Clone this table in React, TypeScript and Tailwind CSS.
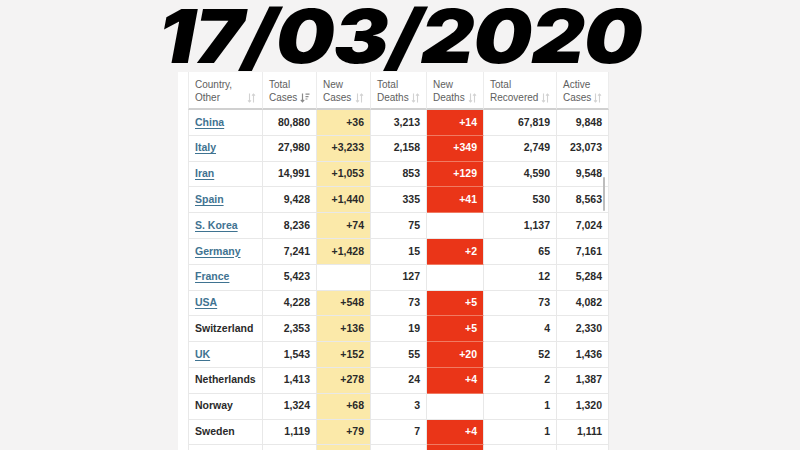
import React from "react";

type Row = {
  country: string;
  link: boolean;
  total: string;
  newCases: string;
  deaths: string;
  newDeaths: string;
  recovered: string;
  active: string;
  hidden?: boolean;
};

const rows: Row[] = [
  { country: "China", link: true, total: "80,880", newCases: "+36", deaths: "3,213", newDeaths: "+14", recovered: "67,819", active: "9,848" },
  { country: "Italy", link: true, total: "27,980", newCases: "+3,233", deaths: "2,158", newDeaths: "+349", recovered: "2,749", active: "23,073" },
  { country: "Iran", link: true, total: "14,991", newCases: "+1,053", deaths: "853", newDeaths: "+129", recovered: "4,590", active: "9,548" },
  { country: "Spain", link: true, total: "9,428", newCases: "+1,440", deaths: "335", newDeaths: "+41", recovered: "530", active: "8,563" },
  { country: "S. Korea", link: true, total: "8,236", newCases: "+74", deaths: "75", newDeaths: "", recovered: "1,137", active: "7,024" },
  { country: "Germany", link: true, total: "7,241", newCases: "+1,428", deaths: "15", newDeaths: "+2", recovered: "65", active: "7,161" },
  { country: "France", link: true, total: "5,423", newCases: "", deaths: "127", newDeaths: "", recovered: "12", active: "5,284" },
  { country: "USA", link: true, total: "4,228", newCases: "+548", deaths: "73", newDeaths: "+5", recovered: "73", active: "4,082" },
  { country: "Switzerland", link: false, total: "2,353", newCases: "+136", deaths: "19", newDeaths: "+5", recovered: "4", active: "2,330" },
  { country: "UK", link: true, total: "1,543", newCases: "+152", deaths: "55", newDeaths: "+20", recovered: "52", active: "1,436" },
  { country: "Netherlands", link: false, total: "1,413", newCases: "+278", deaths: "24", newDeaths: "+4", recovered: "2", active: "1,387" },
  { country: "Norway", link: false, total: "1,324", newCases: "+68", deaths: "3", newDeaths: "", recovered: "1", active: "1,320" },
  { country: "Sweden", link: false, total: "1,119", newCases: "+79", deaths: "7", newDeaths: "+4", recovered: "1", active: "1,111" },
  // next row, only its top edge shows below the fold
  { country: "Belgium", link: true, total: "1,243", newCases: "+185", deaths: "10", newDeaths: "+6", recovered: "1", active: "1,232", hidden: true },
];

// little up/down arrows shown in every header cell
const SortIcon = ({ active = false }: { active?: boolean }) =>
  active ? (
    <svg width="10" height="10" viewBox="0 0 10 10" className="shrink-0">
      <path d="M2.5 0.5v8M0.8 6.8l1.7 2 1.7-2" stroke="#8a8a8a" strokeWidth="1.2" fill="none" />
      <path d="M5.5 1.2h4M5.5 3.6h3M5.5 6h2" stroke="#8a8a8a" strokeWidth="1.2" />
    </svg>
  ) : (
    <svg width="9" height="10" viewBox="0 0 9 10" className="shrink-0">
      <path d="M2.5 0.5v8.5M1 7.3l1.5 1.7 1.5-1.7" stroke="#d2d2d2" strokeWidth="1.1" fill="none" />
      <path d="M6.5 9.5v-8.5M5 2.7l1.5-1.7 1.5 1.7" stroke="#d2d2d2" strokeWidth="1.1" fill="none" />
    </svg>
  );

const headers: { lines: string[]; active?: boolean }[] = [
  { lines: ["Country,", "Other"] },
  { lines: ["Total", "Cases"], active: true },
  { lines: ["New", "Cases"] },
  { lines: ["Total", "Deaths"] },
  { lines: ["New", "Deaths"] },
  { lines: ["Total", "Recovered"] },
  { lines: ["Active", "Cases"] },
];

const cell = "h-[25.8px] flex items-center justify-end pr-[6px] border-r border-b border-[#e8e8e8]";

export default function App() {
  return (
    <div className="w-[800px] h-[450px] overflow-hidden bg-[#f4f3f3] flex flex-col font-['Liberation_Sans',Arial,sans-serif]">
      {/* Date title */}
      <h1 className="relative z-10 h-[72px] shrink-0 flex justify-center text-[74px] leading-[72px] font-black italic text-black tracking-[-1px] font-['Inter',sans-serif]">
        <span className="inline-block scale-x-[1.12]">17/03/2020</span>
      </h1>

      {/* Table panel */}
      <div className="relative ml-[178px] w-[431px] flex-1 bg-white pl-[10px]">
        <div className="grid grid-cols-[75px_54px_54px_56px_57px_73px_52px] text-[10.5px]">
          {headers.map((h, i) => (
            <div
              key={i}
              className={`h-[38px] flex items-start justify-between pl-[6px] pr-[6px] pt-[6px] border-r border-b-2 border-r-[#ececec] border-b-[#d0d0d0] ${i === 0 ? "border-l border-l-[#ececec]" : ""}`}
            >
              <div className="text-[10px] leading-[13px] text-[#5e5e5e]">
                <div>{h.lines[0]}</div>
                <div>{h.lines[1]}</div>
              </div>
              <div className="pt-[15px]">
                <SortIcon active={h.active} />
              </div>
            </div>
          ))}

          {rows.map((r) => (
            <React.Fragment key={r.country}>
              <div className="h-[25.8px] flex items-center pl-[6px] border-l border-r border-b border-[#e8e8e8] font-bold">
                {r.hidden ? null : r.link ? (
                  <span className="text-[#3f7391] underline underline-offset-2">{r.country}</span>
                ) : (
                  <span className="text-[#2a2a2a]">{r.country}</span>
                )}
              </div>
              <div className={`${cell} font-bold text-[#2a2a2a]`}>{r.hidden ? "" : r.total}</div>
              <div className={`${cell} font-bold text-[#2a2a2a] ${r.newCases ? "bg-[#fbe9a9]" : ""}`}>{r.hidden ? "" : r.newCases}</div>
              <div className={`${cell} font-bold text-[#2a2a2a]`}>{r.hidden ? "" : r.deaths}</div>
              <div className={`${cell} font-bold text-white ${r.newDeaths ? "bg-[#ea3518] border-b-[#f07a62]" : ""}`}>{r.hidden ? "" : r.newDeaths}</div>
              <div className={`${cell} font-bold text-[#2a2a2a]`}>{r.hidden ? "" : r.recovered}</div>
              <div className={`${cell} font-bold text-[#2a2a2a]`}>{r.hidden ? "" : r.active}</div>
            </React.Fragment>
          ))}
        </div>

        {/* scrollbar thumb */}
        <div className="absolute left-[425px] top-[105px] w-[2px] h-[34px] rounded-full bg-[#bdbdbd]" />
      </div>
    </div>
  );
}
